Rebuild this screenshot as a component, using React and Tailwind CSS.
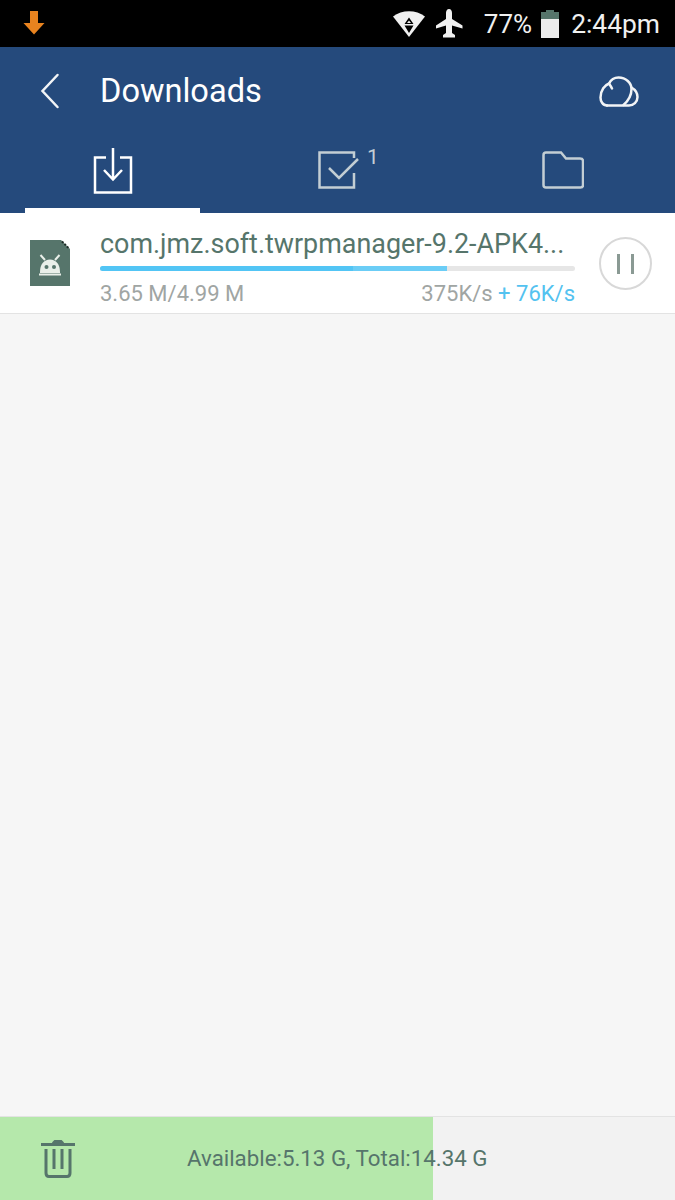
import React from 'react';

const StatusBar = () => (
  <div className="h-[47px] bg-black flex items-center justify-between pl-[23px] pr-[15px] text-[#f0f0f0]">
    <svg width="22" height="24" viewBox="0 0 22 24" className="mt-[-1px]">
      <path d="M7 0h8v12h6.500L11 23.500.500 12H7z" fill="#e8831f" />
    </svg>
    <div className="flex items-center">
      <svg width="34" height="28" viewBox="0 0 34 28" className="mr-[10px]">
        <path d="M1 6.500C10-.5 24-.5 33 6.500L17 27z" fill="#f0f0f0" />
        <path d="M17 7.500l4.500 6.500h-9zM12.500 15.500h9L17 23z" fill="#000" />
        <path d="M17 10.500l2 2.500h-4z" fill="#f0f0f0" />
      </svg>
      <svg width="28" height="30" viewBox="0 0 28 30" className="mr-[20px]">
        <path d="M13 0C15 0 16 2 16 4V10L26.500 16.500V19.500L16 16.500V24L19 26V28.500H7V26L10 24V16.500L0 19.500V16.500L10 10V4C10 2 11 0 13 0z" fill="#f0f0f0" />
      </svg>
      <span className="text-[26px] leading-none mr-[9px] mt-[1px]">77%</span>
      <svg width="18" height="28" viewBox="0 0 18 28" className="mr-[12px]">
        <path d="M5 0h8v2h5v7H0V2h5z" fill="#56756b" />
        <rect y="9" width="18" height="19" fill="#ececec" />
      </svg>
      <span className="text-[26.4px] leading-none mt-[1px]">2:44pm</span>
    </div>
  </div>
);

const Header = () => (
  <div className="h-[166px] bg-[#254a7c] flex flex-col">
    <div className="h-[88px] flex items-center justify-between pl-[40px] pr-[36px]">
      <div className="flex items-center">
        <svg width="20" height="36" viewBox="0 0 20 36" fill="none" stroke="#f2f4f6" strokeWidth="2.500" strokeLinecap="round">
          <path d="M17.500 2L2.500 18l15 16" />
        </svg>
        <span className="ml-[40px] text-[32.6px] leading-none text-white">Downloads</span>
      </div>
      <svg width="40" height="31" viewBox="0 0 40 31" fill="none" stroke="#f2f4f6" strokeWidth="2.500" strokeLinecap="round">
        <path d="M8 29.500C3.500 29.500 1.500 25 1.500 21.500 1.500 14 6 9 10 7.500 12 3.500 16 1.500 19.500 1.500 27 1.500 32.500 7 32.500 13 32.500 19 29 25 24.500 29" />
        <path d="M10 7.500C11 9 12 10.500 13 12.500" />
        <path d="M32.500 11.500C36 13.500 38.500 17.500 38.500 21 38.500 26 34.500 29.500 30 29.500H8" />
      </svg>
    </div>
    <div className="grid grid-cols-3 flex-1 pt-[13px]">
      <div className="flex flex-col items-center">
        <svg width="40" height="46" viewBox="0 0 40 46" fill="none" stroke="#fff" strokeWidth="2.500">
          <path d="M13 9.500H2V44.500H38V9.500H27" />
          <path d="M20 0V31M11 22l9 9.500L29 22" />
        </svg>
        <div className="mt-[14px] h-[5px] w-[175px] bg-white" />
      </div>
      <div className="flex justify-center">
        <div className="relative pt-[3px] ml-[3px]">
          <svg width="42" height="38" viewBox="0 0 42 38" fill="none" stroke="#c3ced4" strokeWidth="2.500">
            <path d="M36 7V1.500H1.500V36.500H36V22" />
            <path d="M11 17l10 10L40 8" />
          </svg>
          <span className="absolute left-[49px] top-[-3px] text-[21px] leading-[24px] text-[#c3ced4]">1</span>
        </div>
      </div>
      <div className="flex justify-center pt-[3px]">
        <svg width="42" height="38" viewBox="0 0 42 38" fill="none" stroke="#c3ced4" strokeWidth="2.500">
          <path d="M1.500 4q0-2.500 2.500-2.500h15l5 6h14q3 0 3 2.500v24q0 2.500-2.500 2.500H4q-2.500 0-2.500-2.500z" />
        </svg>
      </div>
    </div>
  </div>
);

const DownloadRow = () => (
  <div className="h-[101px] bg-white border-b border-[#e3e3e3] flex items-start pl-[30px] pr-[23px]">
    <svg width="40" height="46" viewBox="0 0 40 46" className="mt-[27px] shrink-0">
      <path d="M0 0H31L40 9V46H0z" fill="#56756b" />
      <path d="M32 1.500L38.500 8" stroke="#1d2b26" strokeWidth="2" strokeDasharray="2 1.500" />
      <g fill="none" stroke="#e9efe9" strokeWidth="2">
        <path d="M10.500 15l4.500 5M29.500 15l-4.500 5" />
        <path d="M11 32c0-7 3.500-11.500 9-11.500s9 4.500 9 11.500z" fill="#e9efe9" />
        <path d="M9 34.500h22" />
      </g>
      <circle cx="16.500" cy="27" r="2" fill="#56756b" />
      <circle cx="24" cy="27" r="2" fill="#56756b" />
    </svg>
    <div className="ml-[30px] w-[475px] shrink-0">
      <div className="mt-[16px] text-[26.9px] leading-[30px] text-[#56756b] truncate">com.jmz.soft.twrpmanager-9.2-APK4...</div>
      <div className="mt-[7px] h-[5px] rounded-full bg-[#e6e6e6] flex overflow-hidden">
        <div className="w-[253px] bg-[#52c5f5]" />
        <div className="w-[94px] bg-[#6bcdf6]" />
      </div>
      <div className="mt-[11px] flex justify-between text-[22px] leading-[24px] text-[#a0a5a3]">
        <span>3.65 M/4.99 M</span>
        <span>375K/s <span className="text-[#53c2f0]">+ 76K/s</span></span>
      </div>
    </div>
    <div className="ml-[24px] mt-[24px] h-[53px] w-[53px] shrink-0 rounded-full border-2 border-[#d8d8d8] flex items-center justify-center gap-[11px]">
      <div className="w-[3px] h-[20px] bg-[#8a9a94]" />
      <div className="w-[3px] h-[20px] bg-[#8a9a94]" />
    </div>
  </div>
);

const Footer = () => (
  <div className="h-[84px] border-t border-[#e3e3e3] bg-[linear-gradient(to_right,#b5e8ab_433px,#f2f2f2_433px)] flex items-center pl-[41px]">
    <svg width="34" height="38" viewBox="0 0 34 38" fill="none" stroke="#56756b" strokeWidth="3">
      <path d="M0 4.500H34M12 3.500L14 1.500H20L22 3.500" />
      <path d="M5 9V33Q5 36.500 8 36.500H26Q29 36.500 29 33V9" />
      <path d="M13 9V29M21 9V29" />
    </svg>
    <span className="ml-[112px] text-[22.3px] leading-none text-[#56756b]">Available:5.13 G, Total:14.34 G</span>
  </div>
);

export default function App() {
  return (
    <div className="w-[675px] h-[1200px] flex flex-col bg-[#f6f6f6] font-['Roboto',sans-serif]">
      <StatusBar />
      <Header />
      <DownloadRow />
      <div className="flex-1" />
      <Footer />
    </div>
  );
}
